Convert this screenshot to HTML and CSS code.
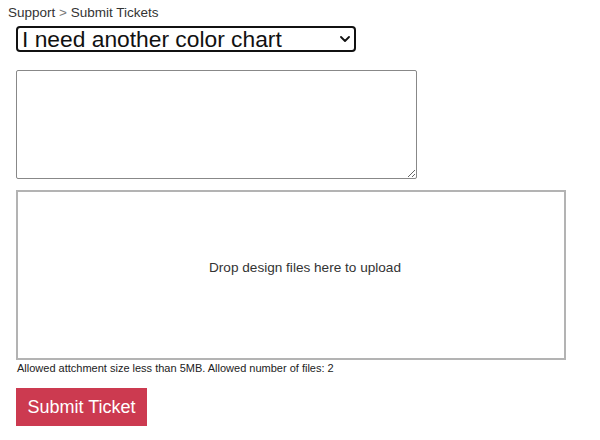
FILE: index.html
```html
<!DOCTYPE html>
<html>
<head>
<meta charset="utf-8">
<link rel="stylesheet" href="styles.css">
</head>
<body>
<div class="page">
  <nav class="crumbs"><span>Support</span> <span class="sep">&gt;</span> <span>Submit Tickets</span></nav>
  <form class="ticket">
    <div class="select-wrap">
      <select class="topic">
        <option>I need another color chart</option>
      </select>
      <svg class="chevron" width="10" height="6" viewBox="0 0 10 6"><path d="M1 1 L5 5 L9 1" fill="none" stroke="#111" stroke-width="1.8" stroke-linecap="round" stroke-linejoin="round"/></svg>
    </div>
    <textarea class="message"></textarea>
    <div class="dropzone">Drop design files here to upload</div>
    <p class="note">Allowed attchment size less than 5MB. Allowed number of files: 2</p>
    <button type="button" class="submit">Submit Ticket</button>
  </form>
</div>
</body>
</html>
```
FILE: styles.css
```css
html, body {
  margin: 0;
  padding: 0;
  background: #fff;
}
.page {
  padding: 5px 8px;
  font-family: "Liberation Sans", Arial, sans-serif;
  color: #222;
}
.crumbs {
  font-size: 13.5px;
  line-height: 16px;
  color: #333;
}
.crumbs .sep {
  color: #777;
}
.ticket {
  display: flex;
  flex-direction: column;
  align-items: flex-start;
  margin-left: 8px;
}
.select-wrap {
  position: relative;
  margin-top: 5px;
}
.topic {
  display: block;
  appearance: none;
  -webkit-appearance: none;
  width: 340px;
  height: 26px;
  box-sizing: border-box;
  font-family: "Liberation Sans", Arial, sans-serif;
  font-size: 22.8px;
  line-height: 22px;
  color: #111;
  border: 2px solid #111;
  border-radius: 4px;
  background: #fff;
  padding: 0 24px 0 4px;
  margin: 0;
}
.chevron {
  position: absolute;
  right: 6px;
  top: 10px;
  pointer-events: none;
}
.message {
  margin-top: 18px;
  width: 401px;
  height: 109px;
  box-sizing: border-box;
  border: 1px solid #888;
  border-radius: 2px;
  padding: 2px;
}
.dropzone {
  margin-top: 11px;
  width: 550px;
  height: 170px;
  box-sizing: border-box;
  border: 2px solid #b3b3b3;
  display: flex;
  align-items: center;
  justify-content: center;
  font-size: 13.6px;
  color: #333;
  padding: 0 0 16px 28px;
}
.note {
  margin: 1px 0 0 1px;
  font-size: 11px;
  line-height: 14px;
  color: #222;
}
.submit {
  margin-top: 13px;
  width: 131px;
  height: 38px;
  border: none;
  background: #cc3a50;
  color: #fff;
  font-family: "Liberation Sans", Arial, sans-serif;
  font-size: 18px;
  padding: 0;
}
```
